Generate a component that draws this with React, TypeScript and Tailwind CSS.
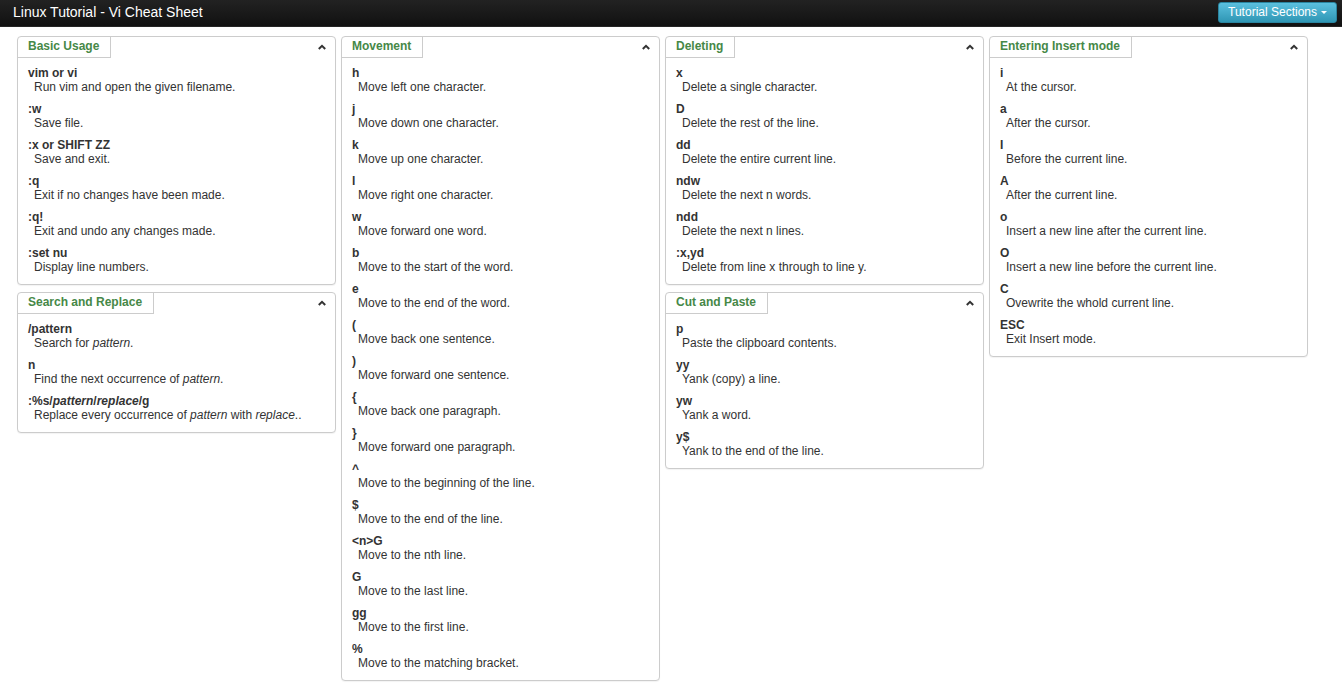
import React from "react";

type Item = { k: React.ReactNode; d: React.ReactNode };
type Panel = { title: string; items: Item[] };

const basic: Panel = {
  title: "Basic Usage",
  items: [
    { k: "vim or vi", d: "Run vim and open the given filename." },
    { k: ":w", d: "Save file." },
    { k: ":x or SHIFT ZZ", d: "Save and exit." },
    { k: ":q", d: "Exit if no changes have been made." },
    { k: ":q!", d: "Exit and undo any changes made." },
    { k: ":set nu", d: "Display line numbers." },
  ],
};

const search: Panel = {
  title: "Search and Replace",
  items: [
    { k: "/pattern", d: <>Search for <i>pattern</i>.</> },
    { k: "n", d: <>Find the next occurrence of <i>pattern</i>.</> },
    {
      k: <>:%s/<i>pattern</i>/<i>replace</i>/g</>,
      d: <>Replace every occurrence of <i>pattern</i> with <i>replace</i>..</>,
    },
  ],
};

const movement: Panel = {
  title: "Movement",
  items: [
    { k: "h", d: "Move left one character." },
    { k: "j", d: "Move down one character." },
    { k: "k", d: "Move up one character." },
    { k: "l", d: "Move right one character." },
    { k: "w", d: "Move forward one word." },
    { k: "b", d: "Move to the start of the word." },
    { k: "e", d: "Move to the end of the word." },
    { k: "(", d: "Move back one sentence." },
    { k: ")", d: "Move forward one sentence." },
    { k: "{", d: "Move back one paragraph." },
    { k: "}", d: "Move forward one paragraph." },
    { k: "^", d: "Move to the beginning of the line." },
    { k: "$", d: "Move to the end of the line." },
    { k: "<n>G", d: "Move to the nth line." },
    { k: "G", d: "Move to the last line." },
    { k: "gg", d: "Move to the first line." },
    { k: "%", d: "Move to the matching bracket." },
  ],
};

const deleting: Panel = {
  title: "Deleting",
  items: [
    { k: "x", d: "Delete a single character." },
    { k: "D", d: "Delete the rest of the line." },
    { k: "dd", d: "Delete the entire current line." },
    { k: "ndw", d: "Delete the next n words." },
    { k: "ndd", d: "Delete the next n lines." },
    { k: ":x,yd", d: "Delete from line x through to line y." },
  ],
};

const cut: Panel = {
  title: "Cut and Paste",
  items: [
    { k: "p", d: "Paste the clipboard contents." },
    { k: "yy", d: "Yank (copy) a line." },
    { k: "yw", d: "Yank a word." },
    { k: "y$", d: "Yank to the end of the line." },
  ],
};

const insert: Panel = {
  title: "Entering Insert mode",
  items: [
    { k: "i", d: "At the cursor." },
    { k: "a", d: "After the cursor." },
    { k: "I", d: "Before the current line." },
    { k: "A", d: "After the current line." },
    { k: "o", d: "Insert a new line after the current line." },
    { k: "O", d: "Insert a new line before the current line." },
    { k: "C", d: "Ovewrite the whold current line." },
    { k: "ESC", d: "Exit Insert mode." },
  ],
};

function Chevron() {
  return (
    <svg width="8" height="6" viewBox="0 0 8 6" className="block">
      <path d="M0.8 5 L4 1.8 L7.2 5" fill="none" stroke="#333" strokeWidth="2" />
    </svg>
  );
}

function PanelBox({ p }: { p: Panel }) {
  return (
    <div className="w-[319px] border border-[#cccccc] rounded-[4px] bg-white shadow-[0_1px_1px_rgba(0,0,0,0.05)]">
      <div className="flex items-start justify-between">
        <div className="h-[21px] pt-[1px] pl-[10px] pr-[11px] border-r border-b border-[#cccccc] text-[12px] font-bold text-[#468847] leading-[16px]">
          {p.title}
        </div>
        <div className="pt-[7px] pr-[9px]">
          <Chevron />
        </div>
      </div>
      <div className="pt-[8px] pb-[2px] pl-[10px] pr-[10px]">
        {p.items.map((it, i) => (
          <div key={i} className="mb-[8px] text-[12px] leading-[14px] text-[#333333]">
            <div className="font-bold pt-[1px] leading-[13px]">{it.k}</div>
            <div className="pl-[6px]">{it.d}</div>
          </div>
        ))}
      </div>
    </div>
  );
}

export default function App() {
  return (
    <div
      className="min-h-[687px] bg-white"
      style={{ fontFamily: '"Liberation Sans", Arial, sans-serif' }}
    >
      <div className="h-[27px] bg-[linear-gradient(to_bottom,#222222,#111111)] border-b border-[#252525] flex items-center justify-between pl-[13px] pr-[5px] pb-[2px]">
        <div className="text-white text-[14px] leading-[16px]">Linux Tutorial - Vi Cheat Sheet</div>
        <button className="h-[21px] px-[9px] rounded-[3px] bg-[linear-gradient(to_bottom,#5bc0de,#2f96b4)] border border-[#2a85a0] text-white text-[12px] leading-[14px] flex items-center gap-[4px]">
          Tutorial Sections
          <span className="inline-block w-0 h-0 border-l-[3px] border-r-[3px] border-t-[3px] border-l-transparent border-r-transparent border-t-white mt-[1px]" />
        </button>
      </div>
      <div className="flex items-start gap-[5px] pl-[17px] pt-[9px]">
        <div className="flex flex-col gap-[7px]">
          <PanelBox p={basic} />
          <PanelBox p={search} />
        </div>
        <div className="flex flex-col gap-[7px]">
          <PanelBox p={movement} />
        </div>
        <div className="flex flex-col gap-[7px]">
          <PanelBox p={deleting} />
          <PanelBox p={cut} />
        </div>
        <div className="flex flex-col gap-[7px]">
          <PanelBox p={insert} />
        </div>
      </div>
    </div>
  );
}
